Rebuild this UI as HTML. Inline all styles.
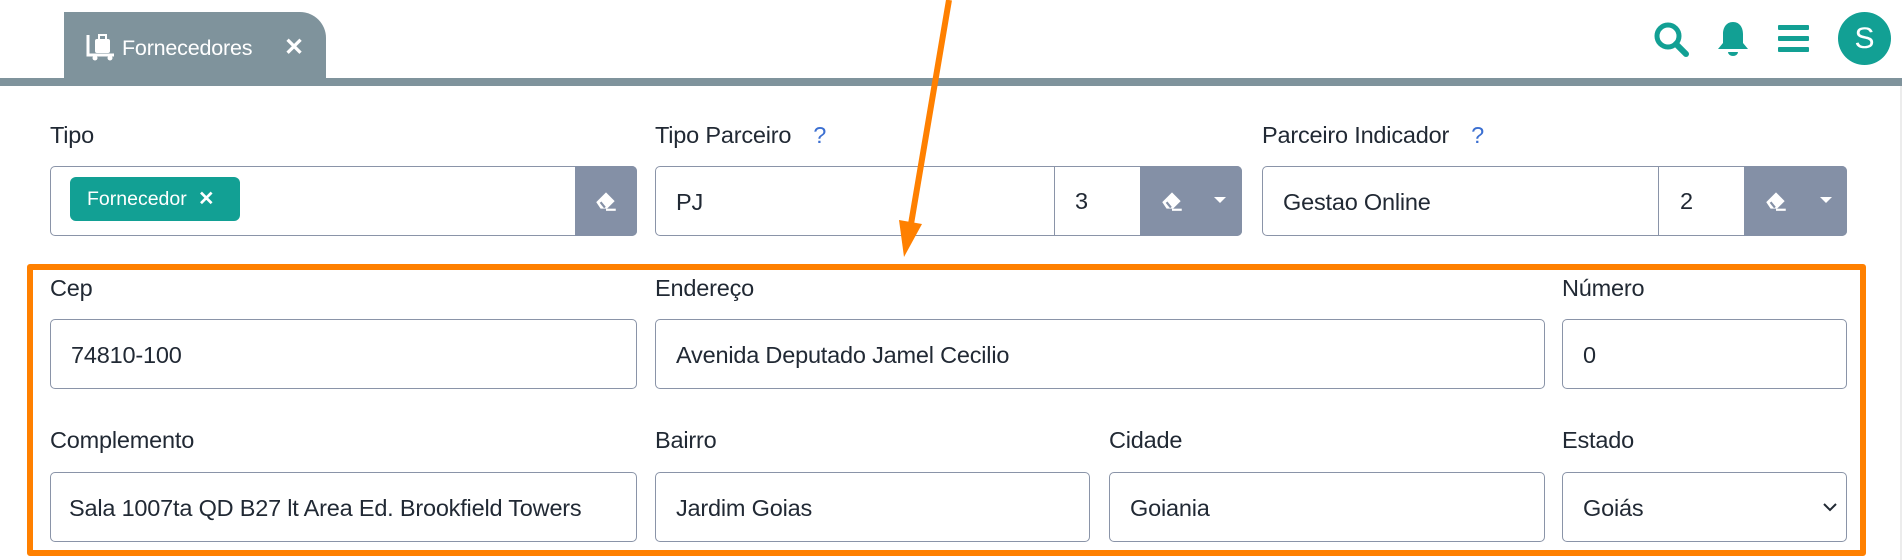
<!DOCTYPE html>
<html><head><meta charset="utf-8"><style>
*{box-sizing:border-box;margin:0;padding:0}
body{width:1902px;height:560px;background:#fff;position:relative;overflow:hidden;font-family:"Liberation Sans",sans-serif;color:#212934}
.a{position:absolute}
.lbl{position:absolute;font-size:23.5px;line-height:26px;color:#212934;letter-spacing:-0.2px}
.inp{position:absolute;border:1px solid #8a94a8;border-radius:5px;background:#fff;height:70px;font-size:23.5px;line-height:70px;padding-left:20px;color:#212934;overflow:hidden;white-space:nowrap;letter-spacing:-0.2px}
.btn{position:absolute;background:#8490a6;top:166px;height:70px;border-radius:0 5px 5px 0}
.q{color:#3b6fd1;margin-left:22px}
</style></head><body>
<!-- tab -->
<div class="a" style="left:64px;top:12px;width:262px;height:70px;background:#7f939c;border-radius:0 26px 0 0;"></div>
<div class="a" style="left:0;top:78px;width:1902px;height:8px;background:#7f939c"></div>
<div class="a" style="left:1900px;top:86px;width:2px;height:474px;background:#ececec"></div>
<svg class="a" style="left:86px;top:33px" width="30" height="28" viewBox="0 0 30 28"><path d="M2 2v20h26" stroke="#fff" stroke-width="3" fill="none"/><rect x="9" y="6" width="15" height="14" rx="2" fill="#fff"/><rect x="13" y="2" width="7" height="5" fill="none" stroke="#fff" stroke-width="2"/><circle cx="9" cy="25" r="2.5" fill="#fff"/><circle cx="24" cy="25" r="2.5" fill="#fff"/></svg>
<div class="a" style="left:122px;top:35px;font-size:21.5px;color:#fff;line-height:26px;letter-spacing:-0.2px">Fornecedores</div>
<div class="a" style="left:284px;top:35px;font-size:24px;color:#fff;font-weight:bold;line-height:26px">✕</div>
<!-- right icons -->
<svg class="a" style="left:1653px;top:21px" width="38" height="38" viewBox="0 0 38 38"><circle cx="15" cy="15" r="11" stroke="#12a094" stroke-width="5" fill="none"/><path d="M23 23l10 10" stroke="#12a094" stroke-width="6" stroke-linecap="round"/></svg>
<svg class="a" style="left:1716px;top:20px" width="34" height="38" viewBox="0 0 34 38"><path d="M17 2c-7 0-10 6-10 12v9l-5 6h30l-5-6v-9c0-6-3-12-10-12z" fill="#12a094"/><path d="M12 32a5 4 0 0 0 10 0z" fill="#12a094"/></svg>
<div class="a" style="left:1778px;top:25px;width:31px;height:5px;background:#12a094;border-radius:1px"></div>
<div class="a" style="left:1778px;top:36px;width:31px;height:5px;background:#12a094;border-radius:1px"></div>
<div class="a" style="left:1778px;top:47px;width:31px;height:5px;background:#12a094;border-radius:1px"></div>
<div class="a" style="left:1838px;top:12px;width:53px;height:53px;border-radius:50%;background:#12a094;color:#fff;font-size:30px;line-height:53px;text-align:center">S</div>
<!-- row 1 -->
<div class="lbl" style="left:50px;top:122px">Tipo</div>
<div class="lbl" style="left:655px;top:122px">Tipo Parceiro<span class="q">?</span></div>
<div class="lbl" style="left:1262px;top:122px">Parceiro Indicador<span class="q">?</span></div>
<div class="inp" style="left:50px;top:166px;width:587px"></div>
<div class="a" style="left:70px;top:177px;width:170px;height:44px;background:#12a094;border-radius:6px;color:#fff;font-size:19.5px;line-height:44px;padding-left:17px;white-space:nowrap">Fornecedor <b style="margin-left:6px">✕</b></div>
<div class="btn" style="left:575px;width:62px"></div>
<div class="inp" style="left:655px;top:166px;width:587px">PJ</div>
<div class="a" style="left:1054px;top:166px;width:1px;height:70px;background:#8a94a8"></div>
<div class="a" style="left:1075px;top:166px;font-size:23.5px;line-height:70px">3</div>
<div class="btn" style="left:1140px;width:102px"></div>
<div class="inp" style="left:1262px;top:166px;width:585px">Gestao Online</div>
<div class="a" style="left:1658px;top:166px;width:1px;height:70px;background:#8a94a8"></div>
<div class="a" style="left:1680px;top:166px;font-size:23.5px;line-height:70px">2</div>
<div class="btn" style="left:1744px;width:103px"></div>
<!-- erasers -->
<svg class="a" style="left:593px;top:188px" width="26" height="24" viewBox="0 0 24 22"><path d="M3 13l9-9 8 8-7 7H7z" fill="#fff"/><path d="M7 13l4 5" stroke="#8490a6" stroke-width="2"/><path d="M12 20h9" stroke="#fff" stroke-width="2"/></svg>
<svg class="a" style="left:1159px;top:188px" width="26" height="24" viewBox="0 0 24 22"><path d="M3 13l9-9 8 8-7 7H7z" fill="#fff"/><path d="M7 13l4 5" stroke="#8490a6" stroke-width="2"/><path d="M12 20h9" stroke="#fff" stroke-width="2"/></svg>
<svg class="a" style="left:1763px;top:188px" width="26" height="24" viewBox="0 0 24 22"><path d="M3 13l9-9 8 8-7 7H7z" fill="#fff"/><path d="M7 13l4 5" stroke="#8490a6" stroke-width="2"/><path d="M12 20h9" stroke="#fff" stroke-width="2"/></svg>
<div class="a" style="left:1214px;top:197px;border-left:6px solid transparent;border-right:6px solid transparent;border-top:6px solid #fff"></div>
<div class="a" style="left:1820px;top:197px;border-left:6px solid transparent;border-right:6px solid transparent;border-top:6px solid #fff"></div>
<!-- row 2 -->
<div class="lbl" style="left:50px;top:275px">Cep</div>
<div class="lbl" style="left:655px;top:275px">Endereço</div>
<div class="lbl" style="left:1562px;top:275px">Número</div>
<div class="inp" style="left:50px;top:319px;width:587px">74810-100</div>
<div class="inp" style="left:655px;top:319px;width:890px">Avenida Deputado Jamel Cecilio</div>
<div class="inp" style="left:1562px;top:319px;width:285px">0</div>
<!-- row 3 -->
<div class="lbl" style="left:50px;top:427px">Complemento</div>
<div class="lbl" style="left:655px;top:427px">Bairro</div>
<div class="lbl" style="left:1109px;top:427px">Cidade</div>
<div class="lbl" style="left:1562px;top:427px">Estado</div>
<div class="inp" style="left:50px;top:472px;width:587px;padding-left:18px">Sala 1007ta QD B27 lt Area Ed. Brookfield Towers</div>
<div class="inp" style="left:655px;top:472px;width:435px">Jardim Goias</div>
<div class="inp" style="left:1109px;top:472px;width:436px">Goiania</div>
<div class="inp" style="left:1562px;top:472px;width:285px">Goiás</div>
<svg class="a" style="left:1822px;top:502px" width="16" height="10" viewBox="0 0 16 10"><path d="M2 2l6 6 6-6" stroke="#212934" stroke-width="2" fill="none"/></svg>
<!-- orange box -->
<div class="a" style="left:27px;top:264px;width:1839px;height:292px;border:6px solid #ff8000;border-radius:3px"></div>
<!-- arrow -->
<svg class="a" style="left:0;top:0" width="1902" height="270"><path d="M949 0L910 230" stroke="#ff8000" stroke-width="6"/><path d="M899 220L922 224L904 257z" fill="#ff8000"/></svg>
</body></html>
